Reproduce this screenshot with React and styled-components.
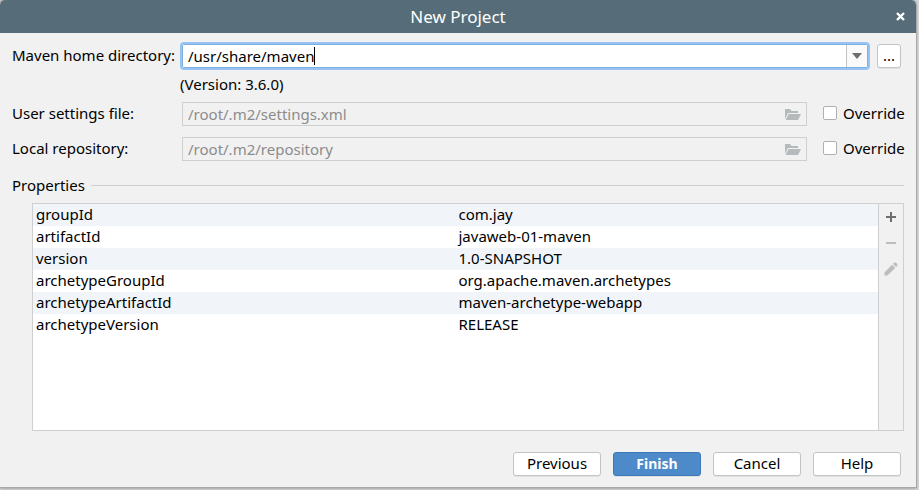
import React, { useState } from "react";
import styled, { createGlobalStyle, css } from "styled-components";

const GlobalStyle = createGlobalStyle`
  *, *::before, *::after { box-sizing: border-box; }
  body {
    margin: 0;
    background: #d4d4d4;
    color: #000;
    font: 15px/20px "Noto Sans", "Open Sans", sans-serif;
  }
  button, input { font: inherit; color: inherit; }
`;

const Dialog = styled.main`
  display: flex;
  flex-direction: column;
  min-height: calc(100vh - 3px);
  margin: 0 3px 3px 0;
  background: #f1f1f1;
  border-radius: 5px 5px 0 0;
  box-shadow: 0 0 0 1px #a8a8a8, 0 1px 3px rgba(0, 0, 0, 0.4);
`;

const TitleBar = styled.header`
  display: grid;
  grid-template-columns: 32px 1fr 32px;
  align-items: center;
  height: 33px;
  background: #566d79;
  color: #fff;
  border-radius: 5px 5px 0 0;
`;

const Title = styled.h1`
  grid-column: 2;
  margin: 0;
  font-size: 17px;
  font-weight: 400;
  line-height: 32px;
  text-align: center;
`;

const IconButton = styled.button`
  display: flex;
  align-items: center;
  justify-content: center;
  width: ${(p) => p.$size || 24}px;
  height: ${(p) => p.$size || 24}px;
  padding: 0;
  border: 0;
  background: none;
  color: ${(p) => p.$color || "#6e6e6e"};
`;

const Content = styled.div`
  display: flex;
  flex: 1;
  flex-direction: column;
  padding: 9px 12px 11px 12px;
`;

const Row = styled.div`
  display: flex;
  align-items: center;
  margin-bottom: ${(p) => p.$after || 0}px;
`;

const FieldLabel = styled.label`
  flex: none;
  width: 168px;
  padding-bottom: 2px;
  white-space: nowrap;
`;

const Combo = styled.div`
  display: flex;
  flex: 1;
  height: 28px;
  margin-right: 7px;
  border: 2px solid #97c3f3;
  border-radius: 4px;
  background: #fff;
  box-shadow: inset 0 0 0 1px #7fb0e2;
`;

const ComboEditor = styled.div`
  display: grid;
  flex: 1;
  align-items: center;
  padding: 0 6px;
  > * { grid-area: 1 / 1; }
`;

const ComboInput = styled.input`
  width: 100%;
  height: 20px;
  padding: 0;
  border: 0;
  outline: 0;
  background: none;
  caret-color: transparent;
`;

const Caret = styled.span`
  justify-self: start;
  height: 18px;
  border-right: 1px solid #000;
  color: transparent;
  line-height: 18px;
  white-space: pre;
  pointer-events: none;
`;

const ComboArrow = styled.button`
  display: flex;
  align-items: center;
  justify-content: center;
  width: 21px;
  margin: 1px;
  padding: 0;
  border: 0;
  border-left: 1px solid #c4c4c4;
  border-radius: 0 2px 2px 0;
  background: #fafafa;
`;

const buttonFace = css`
  height: 24px;
  padding: 0 0 2px;
  border: 1px solid #c4c4c4;
  border-radius: 3px;
  background: #fff;
  box-shadow: 0 1px 0 rgba(0, 0, 0, 0.06);
  line-height: 20px;
`;

const BrowseButton = styled.button`
  ${buttonFace}
  width: 24px;
  margin-right: 3px;
`;

const Version = styled.p`
  margin: 4px 0 8px 168px;
`;

const PathBox = styled.div`
  display: flex;
  flex: 1;
  align-items: center;
  height: 24px;
  margin: 0 16px 0 2px;
  padding: 0 5px;
  border: 1px solid #cfcfcf;
`;

const PathInput = styled.input`
  flex: 1;
  min-width: 0;
  height: 20px;
  padding: 0;
  border: 0;
  background: none;
  color: #8c8c8c;
`;

const Override = styled.label`
  display: flex;
  flex: none;
  align-items: center;
  gap: 6px;
  width: 81px;
  padding-bottom: 2px;
  white-space: nowrap;
`;

const Tick = styled.input`
  appearance: none;
  flex: none;
  width: 14px;
  height: 14px;
  margin: 0;
  border: 1px solid #b0b0b0;
  border-radius: 2px;
  background: #fff;
  &:checked { background: #4d8ac9; }
`;

const SectionTitle = styled.h2`
  display: flex;
  align-items: center;
  gap: 6px;
  margin: 0 0 8px;
  font-size: 15px;
  font-weight: 400;
  line-height: 20px;
  &::after {
    content: "";
    flex: 1;
    height: 1px;
    background: #cfcfcf;
  }
`;

const PropertyPanel = styled.section`
  display: flex;
  flex: 1;
  margin: 0 0 21px 20px;
  border: 1px solid #cfcfcf;
  background: #fff;
`;

const TableArea = styled.div`
  flex: 1;
`;

const Table = styled.table`
  width: 100%;
  table-layout: fixed;
  border-collapse: collapse;
  tr:nth-child(odd) { background: #f1f5fa; }
`;

const Cell = styled.td`
  height: 22px;
  padding: 0 3px;
  line-height: 20px;
  vertical-align: top;
`;

const SideTools = styled.div`
  display: flex;
  flex-direction: column;
  gap: 2px;
  width: 25px;
  padding: 1px 0;
  border-left: 1px solid #cfcfcf;
  background: #f1f1f1;
`;

const Footer = styled.footer`
  display: flex;
  justify-content: flex-end;
  gap: 12px;
  padding-right: 3px;
`;

const ActionButton = styled.button`
  ${buttonFace}
  width: 88px;
  ${(p) =>
    p.$primary &&
    css`
      padding: 0;
      border-color: #3f78b8;
      background: #4d8ac9;
      color: #fff;
      font-size: 14px;
      font-weight: 700;
    `}
`;

function CloseIcon() {
  return (
    <svg width="9" height="9" viewBox="0 0 9 9" stroke="currentColor" strokeWidth="2.4">
      <path d="M1 1l7 7M8 1L1 8" />
    </svg>
  );
}

function FolderIcon() {
  return (
    <svg width="16" height="12" viewBox="0 0 16 12" fill="#b5babd">
      <path d="M0 11V1h5l1.5 2H13v2H3z" />
      <path d="M3.6 6H16l-3 6H.6z" />
    </svg>
  );
}

function PlusIcon() {
  return (
    <svg width="10" height="10" viewBox="0 0 10 10" fill="currentColor">
      <path d="M4 0h2v4h4v2H6v4H4V6H0V4h4z" />
    </svg>
  );
}

function MinusIcon() {
  return (
    <svg width="10" height="2" viewBox="0 0 10 2" fill="currentColor">
      <path d="M0 0h10v2H0z" />
    </svg>
  );
}

function PencilIcon() {
  return (
    <svg width="14" height="14" viewBox="0 0 14 14" fill="currentColor">
      <path d="M8 2.8L11.2 6 3.4 13.5H.5v-3z" />
      <path d="M8.9 2l1.2-1.2q1-.8 2 0l1.1 1.1q.8 1 0 2L12 5.1z" />
    </svg>
  );
}

const properties = [
  ["groupId", "com.jay"],
  ["artifactId", "javaweb-01-maven"],
  ["version", "1.0-SNAPSHOT"],
  ["archetypeGroupId", "org.apache.maven.archetypes"],
  ["archetypeArtifactId", "maven-archetype-webapp"],
  ["archetypeVersion", "RELEASE"],
];

function PathRow({ id, label, path, after }) {
  const [override, setOverride] = useState(false);
  return (
    <Row $after={after}>
      <FieldLabel htmlFor={id}>{label}</FieldLabel>
      <PathBox>
        <PathInput id={id} defaultValue={path} disabled={!override} />
        <IconButton $size={16} disabled={!override} aria-label="Browse">
          <FolderIcon />
        </IconButton>
      </PathBox>
      <Override>
        <Tick
          type="checkbox"
          checked={override}
          onChange={(e) => setOverride(e.target.checked)}
        />
        Override
      </Override>
    </Row>
  );
}

export default function App() {
  const [home, setHome] = useState("/usr/share/maven");
  return (
    <>
      <GlobalStyle />
      <Dialog>
        <TitleBar>
          <Title>New Project</Title>
          <IconButton $size={32} $color="#fff" aria-label="Close">
            <CloseIcon />
          </IconButton>
        </TitleBar>
        <Content>
          <Row>
            <FieldLabel htmlFor="home">Maven home directory:</FieldLabel>
            <Combo>
              <ComboEditor>
                <ComboInput id="home" value={home} onChange={(e) => setHome(e.target.value)} />
                <Caret aria-hidden="true">{home}</Caret>
              </ComboEditor>
              <ComboArrow aria-label="Show choices">
                <svg width="10" height="6" viewBox="0 0 10 6" fill="#6e6e6e">
                  <path d="M0 0h10L5 6z" />
                </svg>
              </ComboArrow>
            </Combo>
            <BrowseButton>...</BrowseButton>
          </Row>
          <Version>(Version: 3.6.0)</Version>
          <PathRow id="settings" label="User settings file:" path="/root/.m2/settings.xml" after={11} />
          <PathRow id="repository" label="Local repository:" path="/root/.m2/repository" after={14} />
          <SectionTitle>Properties</SectionTitle>
          <PropertyPanel>
            <TableArea>
              <Table>
                <tbody>
                  {properties.map(([name, value]) => (
                    <tr key={name}>
                      <Cell>{name}</Cell>
                      <Cell>{value}</Cell>
                    </tr>
                  ))}
                </tbody>
              </Table>
            </TableArea>
            <SideTools>
              <IconButton aria-label="Add"><PlusIcon /></IconButton>
              <IconButton $color="#bdbdbd" disabled aria-label="Remove"><MinusIcon /></IconButton>
              <IconButton $color="#bdbdbd" disabled aria-label="Edit"><PencilIcon /></IconButton>
            </SideTools>
          </PropertyPanel>
          <Footer>
            <ActionButton>Previous</ActionButton>
            <ActionButton $primary>Finish</ActionButton>
            <ActionButton>Cancel</ActionButton>
            <ActionButton>Help</ActionButton>
          </Footer>
        </Content>
      </Dialog>
    </>
  );
}
